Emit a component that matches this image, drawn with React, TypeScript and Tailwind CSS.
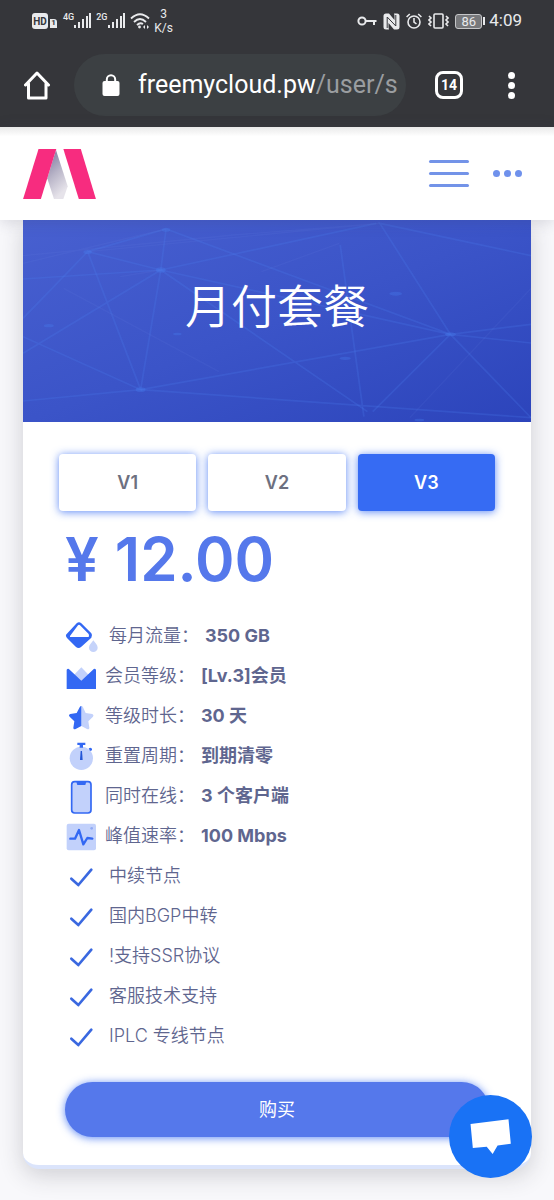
import React, { useState } from "react";

const iconClass = "size-8 shrink-0 overflow-visible";

function DropIcon() {
  return (
    <svg viewBox="48 30 96 96" className={iconClass} aria-hidden="true">
      <path d="M53 72 L83 40 Q90 34 97 40 L127 70 Q132 77 127 83 L97 110 Q89 118 81 111 L54 84 Q48 77 53 72Z" fill="#3368f3" />
      <path d="M63 78 L87 46 Q90 43 93 46 L119 72 Q121 76 119 81 L63 81Z" fill="#fff" />
      <path d="M133 91 C139 99 146 106 146 113 A13 13 0 0 1 120 113 C120 106 127 99 133 91Z" fill="#c5d3fa" />
    </svg>
  );
}

function CrownIcon() {
  return (
    <svg viewBox="48 150 96 96" className={iconClass} aria-hidden="true">
      <path d="M97 172 L123 199 L97 222 L71 199Z" fill="#c2d1fb" />
      <path d="M53 179 Q57 174 62 179 L97 212 L132 179 Q137 174 141 179 V237 H53Z" fill="#3368f3" />
    </svg>
  );
}

function StarIcon() {
  return (
    <svg viewBox="48 270 96 96" className={iconClass} aria-hidden="true">
      <path d="M97 288 Q100 288 102 292 L110 309 L130 312 Q136 315 132 320 L118 334 L121 353 Q121 360 114 357 L97 348Z" fill="#c2d1fb" />
      <path d="M97 288 Q94 288 92 292 L83 309 L64 312 Q57 315 62 320 L76 334 L73 353 Q73 360 80 357 L97 348Z" fill="#3368f3" />
    </svg>
  );
}

function StopwatchIcon() {
  return (
    <svg viewBox="48 15 96 96" className={iconClass} aria-hidden="true">
      <circle cx="97" cy="70" r="35" fill="#c2d1fb" />
      <path d="M85 23 H109 V30 H102 V38 H92 V30 H85Z" fill="#3368f3" />
      <path d="M119 40 L125 38 L129 41 V46 L123 48Z" fill="#3368f3" />
      <path d="M95 48 H99 L101 75 H93Z" fill="#2456d6" />
    </svg>
  );
}

function PhoneIcon() {
  return (
    <svg viewBox="48 135 96 96" className={iconClass} aria-hidden="true">
      <rect x="68" y="140" width="58" height="94" rx="9" fill="#c2d1fb" stroke="#3368f3" strokeWidth="5" />
      <path d="M82 140 H112 L109 150 H85Z" fill="#3368f3" />
    </svg>
  );
}

function PulseIcon() {
  return (
    <svg viewBox="48 255 96 96" className={iconClass} aria-hidden="true">
      <rect x="53" y="266" width="88" height="80" rx="6" fill="#c2d1fb" />
      <path d="M64 311 H78 L90 285 L103 328 L115 309 L130 311" fill="none" stroke="#3368f3" strokeWidth="7" strokeLinecap="round" strokeLinejoin="round" />
      <circle cx="128" cy="280" r="4" fill="#90aaf5" />
    </svg>
  );
}

function CheckIcon() {
  return (
    <svg viewBox="48 15 96 96" className={iconClass} aria-hidden="true">
      <path d="M67 71 L88 90 L127 44" fill="none" stroke="#3a68e0" strokeWidth="8" strokeLinecap="round" strokeLinejoin="round" />
    </svg>
  );
}

const specs = [
  { icon: <DropIcon />, label: "每月流量：", value: "350 GB", wide: true },
  { icon: <CrownIcon />, label: "会员等级：", value: "[Lv.3]会员" },
  { icon: <StarIcon />, label: "等级时长：", value: "30 天" },
  { icon: <StopwatchIcon />, label: "重置周期：", value: "到期清零" },
  { icon: <PhoneIcon />, label: "同时在线：", value: "3 个客户端" },
  { icon: <PulseIcon />, label: "峰值速率：", value: "100 Mbps" },
];

const perks = ["中续节点", "国内BGP中转", "!支持SSR协议", "客服技术支持", "IPLC 专线节点"];

function SignalBars() {
  return (
    <svg viewBox="0 0 18 16" className="h-4 w-[18px]" fill="#e9eaec" aria-hidden="true">
      <rect x="0" y="12" width="2" height="3" />
      <rect x="4" y="9" width="2" height="6" />
      <rect x="8" y="6" width="2" height="9" />
      <rect x="12" y="3" width="2" height="12" />
      <rect x="15" y="0" width="2" height="15" />
    </svg>
  );
}

function StatusBar() {
  return (
    <div className="flex h-[42px] items-center justify-between px-8 text-[#e9eaec]">
      <div className="flex items-center">
        <span className="flex h-4 w-4 items-center justify-center rounded-[3px] bg-[#e9eaec] text-[10px] font-bold text-[#35363a]">HD</span>
        <span className="mt-1 ml-0.5 flex h-[9px] w-[7px] items-center justify-center rounded-tr-[3px] bg-[#e9eaec] text-[8px] font-bold text-[#35363a]">1</span>
        <span className="mb-2 ml-1.5 text-[9px] leading-none font-medium">4G</span>
        <SignalBars />
        <span className="mb-2 ml-1 text-[9px] leading-none font-medium">2G</span>
        <SignalBars />
        <svg viewBox="0 0 20 16" className="ml-1 h-4 w-5" fill="none" stroke="#e9eaec" strokeWidth="1.8" aria-hidden="true">
          <path d="M1 5.5 Q10 -3 19 5.5" />
          <path d="M4 9 Q10 3 16 9" />
          <path d="M7 12 Q10 9 13 11" />
          <circle cx="9.5" cy="14" r="1.4" fill="#e9eaec" stroke="none" />
          <path d="M13 14 l2 -2 v4z M19 14 l-2 -2 v4z" fill="#e9eaec" stroke="none" />
        </svg>
        <span className="ml-0.5 w-6 text-center text-xs leading-[14px]">
          3<br />K/s
        </span>
      </div>
      <div className="flex items-center">
        <svg viewBox="0 0 20 12" className="h-3 w-5" fill="none" stroke="#e9eaec" strokeWidth="2" aria-hidden="true">
          <circle cx="5" cy="6" r="3.6" />
          <path d="M9 6 H19.5 M17 6 V10" />
        </svg>
        <svg viewBox="0 0 17 17" className="ml-1.5 size-[17px]" aria-hidden="true">
          <path d="M3 0.5 H6 L11.5 7 V2.5 L11 0.5 H14 Q16.5 0.5 16.5 3 V14 Q16.5 16.5 14 16.5 H11 L5.5 10 V14.5 L6 16.5 H3 Q0.5 16.5 0.5 14 V3 Q0.5 0.5 3 0.5Z" fill="#e9eaec" />
          <path d="M4.2 15 V4 L12.8 13 V2" fill="none" stroke="#35363a" strokeWidth="1" />
        </svg>
        <svg viewBox="0 0 16 16" className="ml-1.5 size-4" fill="none" stroke="#e9eaec" strokeWidth="1.6" aria-hidden="true">
          <circle cx="8" cy="9" r="6" />
          <path d="M8 5 V9 L10.5 11 M0.6 4 L3.8 1 M15.4 4 L12.2 1" />
        </svg>
        <svg viewBox="0 0 21 16" className="ml-1.5 h-4 w-[21px]" fill="none" stroke="#e9eaec" strokeWidth="1.6" aria-hidden="true">
          <rect x="6" y="1" width="9" height="14" rx="1" />
          <path d="M1 3 l2 2 l-2 2 l2 2 l-2 2 l2 2 M18 3 l2 2 l-2 2 l2 2 l-2 2 l2 2" />
        </svg>
        <span className="ml-1.5 flex h-[15px] w-[27px] items-center justify-center rounded-[3px] border border-[#c5c6c8] bg-[#77787b] text-[13px] leading-none">86</span>
        <span className="ml-px h-2 w-[2px] bg-[#e9eaec]" />
        <span className="ml-1 text-[17px]">4:09</span>
      </div>
    </div>
  );
}

function BrowserBar() {
  return (
    <div className="flex items-center pt-3 pr-[33px] pb-2.5 pl-6">
      <button aria-label="主页" className="shrink-0">
        <svg viewBox="0 0 28 29" className="h-[29px] w-7" fill="none" stroke="#fff" strokeWidth="3" strokeLinejoin="round" strokeLinecap="round" aria-hidden="true">
          <path d="M1.5 14 L13 2 L24.5 14 M4.5 12.5 V27 H22 V12.5" />
        </svg>
      </button>
      <button aria-label="网址" className="ml-[22px] flex h-[62px] min-w-0 flex-1 items-center rounded-full bg-[#3c4043] pr-2 pl-7">
        <svg viewBox="0 0 18 22" className="h-[22px] w-[18px] shrink-0" aria-hidden="true">
          <rect x="0.5" y="7" width="17" height="15" rx="2" fill="#fff" />
          <path d="M4.8 8 V5.5 a4.2 4.2 0 0 1 8.4 0 V8" fill="none" stroke="#fff" strokeWidth="2" />
        </svg>
        <span className="ml-[18px] min-w-0 flex-1 overflow-hidden text-left text-[25px] leading-8 whitespace-nowrap text-white">
          freemycloud.pw<span className="text-[#9a9da0]">/user/s</span>
        </span>
      </button>
      <button aria-label="标签页" className="ml-[29px] flex size-7 shrink-0 items-center justify-center rounded-lg border-[3px] border-white text-sm font-bold text-white">
        14
      </button>
      <button aria-label="更多" className="ml-[38px] flex w-5 shrink-0 flex-col items-center gap-[3px]">
        <span className="size-[7px] rounded-full bg-white" />
        <span className="size-[7px] rounded-full bg-white" />
        <span className="size-[7px] rounded-full bg-white" />
      </button>
    </div>
  );
}

function SiteHeader() {
  return (
    <header className="relative z-10 flex h-[93px] items-center justify-between bg-white bg-linear-to-b from-[#e9e9e9] to-white to-10% pr-8 pl-[23px] shadow-[0_2px_14px_rgba(60,60,90,0.18)]">
      <a href="#" aria-label="首页">
        <svg viewBox="69 87 217 149" className="h-[50px] w-[73px]" aria-hidden="true">
          <defs>
            <linearGradient id="fold" x1="0" y1="0" x2="0.4" y2="1">
              <stop offset="0" stopColor="#76719a" />
              <stop offset="0.55" stopColor="#b9b5c8" />
              <stop offset="1" stopColor="#e6e3ea" />
            </linearGradient>
          </defs>
          <path d="M167 90 L202 198 L189 236 H161 L141 174Z" fill="url(#fold)" />
          <path d="M115 87 H168 L122 236 H69Z" fill="#f72c7f" />
          <path d="M189 87 H241 L286 236 H235Z" fill="#f72c7f" />
        </svg>
      </a>
      <div className="flex items-center gap-6">
        <button aria-label="菜单" className="flex w-10 flex-col gap-[9px]">
          <span className="h-[3px] rounded-full bg-[#7393e8]" />
          <span className="h-[3px] rounded-full bg-[#7393e8]" />
          <span className="h-[3px] rounded-full bg-[#7393e8]" />
        </button>
        <button aria-label="更多选项" className="flex gap-1">
          <span className="size-[7px] rounded-full bg-[#6f91ec]" />
          <span className="size-[7px] rounded-full bg-[#6f91ec]" />
          <span className="size-[7px] rounded-full bg-[#6f91ec]" />
        </button>
      </div>
    </header>
  );
}

function Banner() {
  return (
    <div className="relative flex h-[202px] items-center justify-center bg-linear-to-br from-[#4860d0] via-[#3b54c8] to-[#2c44bb] pb-[30px]">
      <svg viewBox="65 15 1438 606" preserveAspectRatio="none" className="absolute inset-0 size-full" aria-hidden="true">
        <g fill="none" stroke="#4c7cf0" strokeOpacity="0.24" strokeWidth="5">
          <path d="M65 310 L248 110 L398 524 L65 365 M470 42 L455 165 L398 524 M248 110 L455 165 L65 415 M248 110 L470 42 L1275 358 L1075 25 L1503 122" />
          <path d="M455 165 L1065 25 M455 165 L1040 590 M398 524 L1275 358 L1055 590 M1275 358 L1503 608 M1275 358 L1503 328 M1275 358 L1503 384" />
          <path d="M65 558 L398 524 L1503 608 M65 192 L455 165 L1275 358 M963 90 L1030 605" />
        </g>
        <g fill="none" stroke="#7d9cf5" strokeOpacity="0.08" strokeWidth="4">
          <path d="M65 122 L660 60 L1075 25 M65 145 L470 42 M248 110 L1075 25 M180 220 L620 470 M1503 220 L1160 608 M455 165 L340 185 M740 170 L960 85" />
        </g>
        <g fill="#4a82f2" fillOpacity="0.3">
          <ellipse cx="470" cy="44" rx="12" ry="6" />
          <ellipse cx="248" cy="111" rx="12" ry="6" />
          <ellipse cx="455" cy="165" rx="14" ry="8" />
          <ellipse cx="398" cy="524" rx="14" ry="7" />
          <ellipse cx="1275" cy="358" rx="16" ry="6" />
          <ellipse cx="1120" cy="236" rx="18" ry="6" />
          <ellipse cx="977" cy="430" rx="16" ry="5" />
          <ellipse cx="138" cy="332" rx="14" ry="5" />
          <ellipse cx="502" cy="357" rx="12" ry="4" />
          <ellipse cx="1187" cy="615" rx="14" ry="4" />
        </g>
      </svg>
      <h1 className="relative text-[46px] leading-none font-[350] text-white">月付套餐</h1>
    </div>
  );
}

export default function App() {
  const [plan, setPlan] = useState("V3");
  return (
    <div className="relative min-h-screen overflow-hidden bg-[#f8f8fb] font-['Inter','Noto_Sans_CJK_SC',sans-serif]">
      <div className="bg-[#35363a] pb-px font-['Roboto',sans-serif]">
        <StatusBar />
        <BrowserBar />
      </div>
      <SiteHeader />
      <main className="px-[23px] pb-8">
        <section className="overflow-hidden rounded-b-2xl border-b-4 border-[#dbe4fb] bg-white shadow-[0_6px_24px_rgba(40,40,50,0.2)]">
          <Banner />
          <div className="px-9 pt-8 pb-7">
            <div className="grid grid-cols-3 gap-3">
              {["V1", "V2", "V3"].map((name) => (
                <button
                  key={name}
                  onClick={() => setPlan(name)}
                  aria-pressed={plan === name}
                  className={
                    plan === name
                      ? "h-[57px] rounded bg-[#366bf3] text-lg font-semibold text-white shadow-[0_1px_8px_rgba(54,107,243,0.8)]"
                      : "h-[57px] rounded bg-white text-lg font-semibold text-[#6d7080] shadow-[0_1px_8px_rgba(54,107,243,0.8)]"
                  }
                >
                  {name}
                </button>
              ))}
            </div>
            <div className="px-1.5">
              <p className="mt-3 flex h-[72px] items-center gap-4 text-[60px] leading-none font-semibold text-[#5578eb]">
                <span>¥</span>
                <span>12.00</span>
              </p>
              <ul className="mt-[21px] text-lg leading-10 text-[#5f668f]">
                {specs.map((s) => (
                  <li key={s.label} className={s.wide ? "flex h-10 items-center gap-3" : "flex h-10 items-center gap-2"}>
                    {s.icon}
                    <span className="whitespace-nowrap">
                      <span className="font-[350]">{s.label}</span>
                      <strong className="ml-1.5 font-bold">{s.value}</strong>
                    </span>
                  </li>
                ))}
                {perks.map((p) => (
                  <li key={p} className="flex h-10 items-center gap-3 font-[350]">
                    <CheckIcon />
                    <span>{p}</span>
                  </li>
                ))}
              </ul>
              <button className="mt-[26px] h-[55px] w-full rounded-full bg-[#5578eb] text-lg text-white shadow-[0_1px_8px_rgba(54,107,243,0.8)]">购买</button>
            </div>
          </div>
        </section>
      </main>
      <button aria-label="在线客服" className="fixed right-[22px] bottom-[22px] z-20 flex size-[83px] items-center justify-center rounded-full bg-[#1972f5]">
        <svg viewBox="210 182 123 106" className="h-[35px] w-[41px]" aria-hidden="true">
          <path d="M211 197 L326 183 L333 257 L293 262 L278 288 L260 266 L218 270Z" fill="#fff" />
        </svg>
      </button>
    </div>
  );
}
